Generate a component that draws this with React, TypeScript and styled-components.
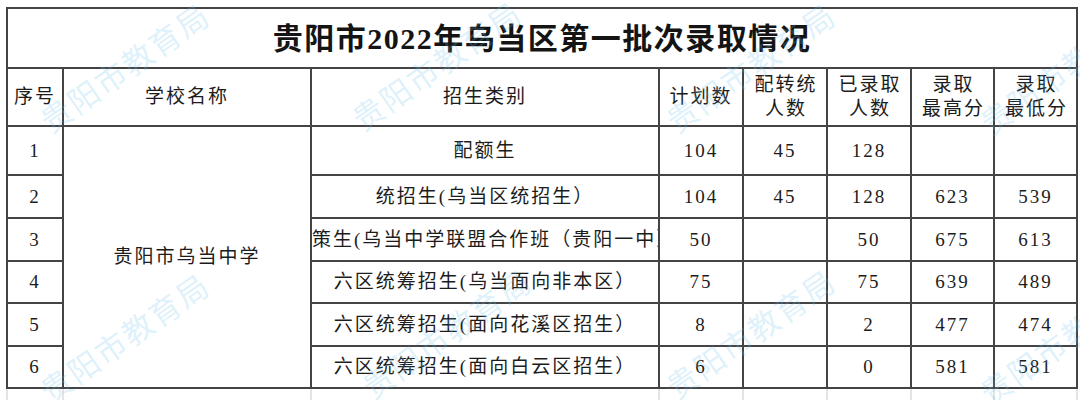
import React from "react";
import styled, { createGlobalStyle } from "styled-components";

const Global = createGlobalStyle`
  html, body { margin: 0; padding: 0; background: #ffffff; overflow: hidden; }
  body { font-family: "Liberation Serif", "Noto Sans CJK SC", serif; color: #1c1c1c; }
`;

const Page = styled.div`
  position: relative;
  width: 1080px;
  height: 400px;
  padding: 7px 0 0 6px;
  box-sizing: border-box;
  overflow: hidden;
`;

const columns = "56px 248px 348px 84px 84px 84px 83px 83px";

const Grid = styled.div`
  display: grid;
  grid-template-columns: ${columns};
  grid-template-rows: 60px 58px 49px 43px 43px 42px 43px 42px;
  border-top: 2px solid #444;
  border-left: 2px solid #444;
  width: max-content;
`;

const FaintRow = styled.div`
  display: grid;
  grid-template-columns: ${columns};
  height: 11px;
  border-left: 2px solid #e4e4e4;
  width: max-content;
`;

const Cell = styled.div<{ $span?: number; $rows?: number }>`
  box-sizing: border-box;
  border-right: 2px solid #444;
  border-bottom: 2px solid #444;
  grid-column: ${(p) => (p.$span ? `span ${p.$span}` : "auto")};
  grid-row: ${(p) => (p.$rows ? `span ${p.$rows}` : "auto")};
  display: flex;
  align-items: center;
  justify-content: center;
  text-align: center;
  font-size: 19px;
  letter-spacing: 2px;
  line-height: 24px;
  white-space: nowrap;
  overflow: hidden;
  color: #1c1c1c;
`;

const FaintCell = styled.div`
  box-sizing: border-box;
  border-right: 2px solid #e4e4e4;
`;

const TitleCell = styled(Cell)`
  font-size: 30px;
  font-weight: 700;
  letter-spacing: 1.5px;
  color: #141414;
  padding-top: 2px;
`;

const OverflowCell = styled(Cell)`
  justify-content: flex-start;
  text-align: left;
`;

const HeadText = styled.span`
  display: block;
  padding-left: 2px;
`;

const Watermarks = styled.div`
  position: absolute;
  inset: 0;
  pointer-events: none;
`;

const Mark = styled.div`
  position: absolute;
  width: 220px;
  margin-left: -110px;
  margin-top: -18px;
  text-align: center;
  font-family: "Noto Sans CJK SC", sans-serif;
  font-size: 31px;
  letter-spacing: 2px;
  color: rgba(110, 195, 235, 0.24);
  transform: rotate(-35deg);
  white-space: nowrap;
`;

type Row = {
  no: string;
  type: string;
  plan: string;
  trans: string;
  admitted: string;
  high: string;
  low: string;
  overflow?: boolean;
};

const rows: Row[] = [
  { no: "1", type: "配额生", plan: "104", trans: "45", admitted: "128", high: "", low: "" },
  { no: "2", type: "统招生(乌当区统招生）", plan: "104", trans: "45", admitted: "128", high: "623", low: "539" },
  { no: "3", type: "策生(乌当中学联盟合作班（贵阳一中）", plan: "50", trans: "", admitted: "50", high: "675", low: "613", overflow: true },
  { no: "4", type: "六区统筹招生(乌当面向非本区）", plan: "75", trans: "", admitted: "75", high: "639", low: "489" },
  { no: "5", type: "六区统筹招生(面向花溪区招生）", plan: "8", trans: "", admitted: "2", high: "477", low: "474" },
  { no: "6", type: "六区统筹招生(面向白云区招生）", plan: "6", trans: "", admitted: "0", high: "581", low: "581" },
];

const marks = [
  { x: 124, y: 62 },
  { x: 436, y: 60 },
  { x: 750, y: 62 },
  { x: 1064, y: 64 },
  { x: 124, y: 332 },
  { x: 446, y: 328 },
  { x: 750, y: 328 },
  { x: 1064, y: 334 },
];

export default function App() {
  return (
    <>
      <Global />
      <Page>
        <Grid>
          <TitleCell $span={8}>贵阳市2022年乌当区第一批次录取情况</TitleCell>

          <Cell>序号</Cell>
          <Cell>学校名称</Cell>
          <Cell>招生类别</Cell>
          <Cell>计划数</Cell>
          <Cell>
            <HeadText>
              配转统
              <br />
              人数
            </HeadText>
          </Cell>
          <Cell>
            <HeadText>
              已录取
              <br />
              人数
            </HeadText>
          </Cell>
          <Cell>
            <HeadText>
              录取
              <br />
              最高分
            </HeadText>
          </Cell>
          <Cell>
            <HeadText>
              录取
              <br />
              最低分
            </HeadText>
          </Cell>

          {rows.map((r, i) => (
            <React.Fragment key={r.no}>
              <Cell>{r.no}</Cell>
              {i === 0 && <Cell $rows={6}>贵阳市乌当中学</Cell>}
              {r.overflow ? <OverflowCell>{r.type}</OverflowCell> : <Cell>{r.type}</Cell>}
              <Cell>{r.plan}</Cell>
              <Cell>{r.trans}</Cell>
              <Cell>{r.admitted}</Cell>
              <Cell>{r.high}</Cell>
              <Cell>{r.low}</Cell>
            </React.Fragment>
          ))}
        </Grid>
        <FaintRow>
          {Array.from({ length: 8 }).map((_, i) => (
            <FaintCell key={i} />
          ))}
        </FaintRow>
        <Watermarks>
          {marks.map((m, i) => (
            <Mark key={i} style={{ left: m.x, top: m.y }}>
              贵阳市教育局
            </Mark>
          ))}
        </Watermarks>
      </Page>
    </>
  );
}
